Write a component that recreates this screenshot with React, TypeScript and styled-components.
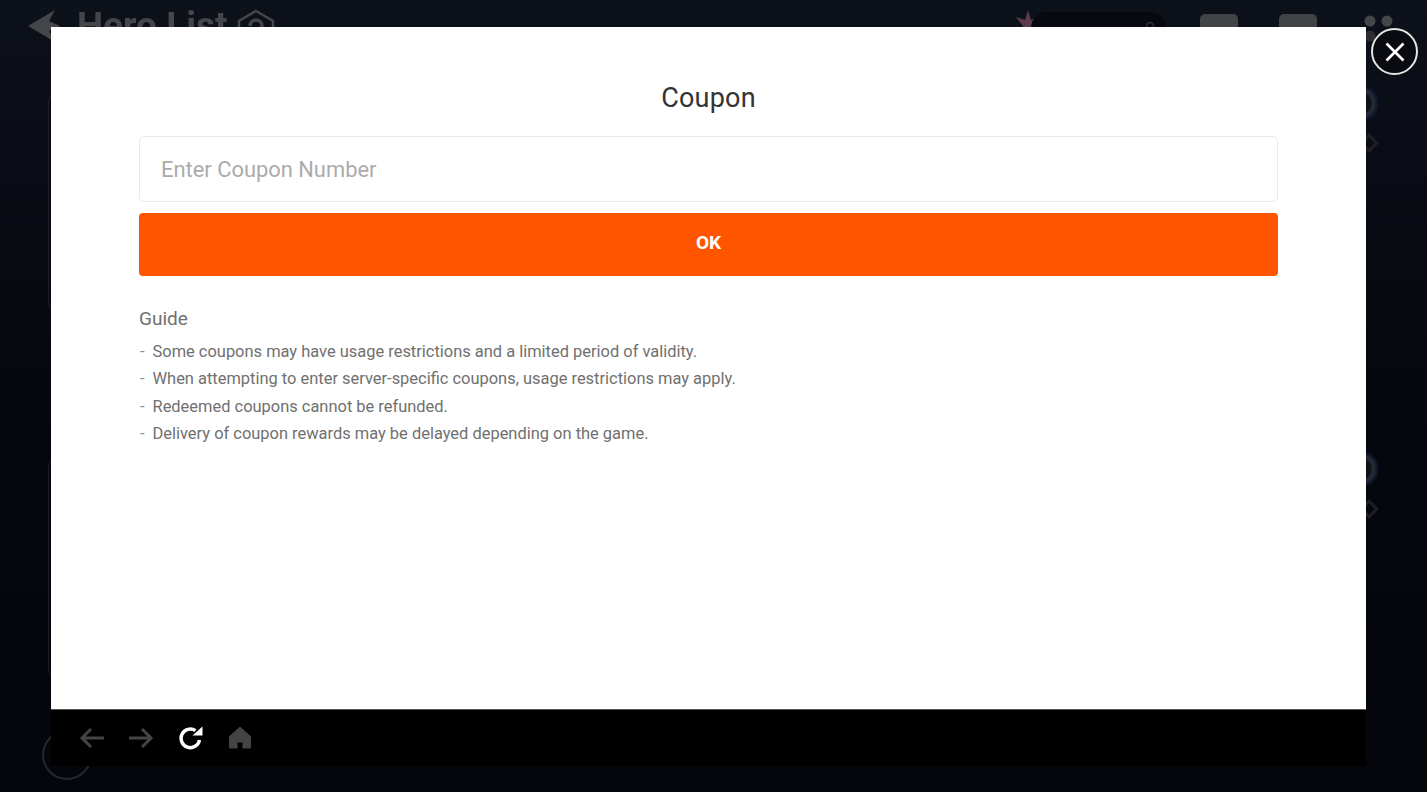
import React, { useState } from 'react';
import styled, { createGlobalStyle } from 'styled-components';

const GlobalStyle = createGlobalStyle`
  html, body, #root {
    margin: 0;
    padding: 0;
    height: 100%;
  }
  body {
    overflow: hidden;
    background: #05070d;
    font-family: Roboto, "Liberation Sans", sans-serif;
  }
`;

// --- Dimmed game page behind the popup ---

const GamePage = styled.div`
  height: 792px;
  overflow: hidden;
  box-sizing: border-box;
  padding: 8px 33px 0 28px;
  display: flex;
  flex-direction: column;
  background: linear-gradient(180deg, #0d1119 0%, #090c14 22%, #05070e 55%, #04060c 100%);
`;

const GameHeader = styled.header`
  display: flex;
  align-items: center;
  height: 36px;
  flex-shrink: 0;
  filter: blur(0.6px);
`;

const HeroTitle = styled.h1`
  margin: 0 0 0 17px;
  font-size: 37px;
  line-height: 36px;
  font-weight: 700;
  white-space: nowrap;
  color: #45464a;
`;

const Spacer = styled.div`
  flex: 1;
`;

const Currency = styled.div`
  width: 135px;
  height: 32px;
  margin: 4px 34px 0 -10px;
  position: relative;
  border-radius: 16px;
  background: #08090e;

  &::after {
    content: '';
    position: absolute;
    right: 12px;
    top: 10px;
    width: 6px;
    height: 6px;
    border-radius: 50%;
    border: 1px solid #45464a;
  }
`;

const SquareButton = styled.div`
  width: 38px;
  height: 30px;
  margin: 6px 41px 0 0;
  border-radius: 5px;
  background: #424347;

  &:last-of-type {
    margin-right: 43px;
  }
`;

const CardRows = styled.div`
  display: flex;
  flex-direction: column;
  gap: 148px;
  margin: 49px 0 0 20px;
  width: 1318px;
`;

const HeroCard = styled.div`
  position: relative;
  height: 216px;
  border-radius: 8px;
  border: 1px solid #1b1e25;
`;

const LevelRing = styled.div`
  position: absolute;
  top: -4px;
  right: -10px;
  width: 20px;
  height: 26px;
  box-sizing: border-box;
  border-radius: 50%;
  border: 3px solid #2c3038;
  background: #0d1116;
  box-shadow: 0 0 0 3px #111c31;
  filter: blur(0.8px);
`;

const RankDiamond = styled.div`
  position: absolute;
  top: 42px;
  right: -11px;
  width: 14px;
  height: 14px;
  box-sizing: border-box;
  border: 3px solid #1e1f22;
  transform: rotate(45deg);
  filter: blur(0.6px);
`;

const GameBottom = styled.div`
  margin: 53px 0 0 14px;
`;

const RoundButton = styled.div`
  width: 50px;
  height: 50px;
  box-sizing: border-box;
  border-radius: 50%;
  border: 2px solid #26272b;
`;

// --- Coupon popup ---

const Overlay = styled.div`
  position: fixed;
  inset: 0;
  padding: 27px 61px 26px 51px;
  display: flex;
  box-sizing: border-box;
`;

const Dialog = styled.div`
  position: relative;
  flex: 1;
  display: flex;
  flex-direction: column;
`;

const CloseButton = styled.button`
  position: absolute;
  top: 1px;
  right: -52px;
  width: 47px;
  height: 47px;
  padding: 0;
  border: 2px solid #e6e6e6;
  border-radius: 50%;
  background: #0a0b10;
  color: #fff;
  display: flex;
  align-items: center;
  justify-content: center;
  cursor: pointer;
`;

const WebContent = styled.main`
  flex: 1;
  background: #fff;
  padding: 52px 88px 0;
  box-sizing: border-box;
`;

const Title = styled.h2`
  margin: 0;
  font-size: 27px;
  line-height: 39px;
  font-weight: 400;
  letter-spacing: 0.2px;
  text-align: center;
  color: #333;
`;

const CouponInput = styled.input`
  display: block;
  width: 100%;
  height: 66px;
  margin-top: 18px;
  padding: 0 21px;
  box-sizing: border-box;
  border: 1px solid #e8e8e8;
  border-radius: 5px;
  outline: none;
  font-family: inherit;
  font-size: 21.9px;
  color: #222;

  &::placeholder {
    color: #ababab;
    opacity: 1;
  }
`;

const OkButton = styled.button`
  display: block;
  width: 100%;
  height: 63px;
  margin-top: 11px;
  padding: 0 0 4px;
  border: none;
  border-radius: 4px;
  background: #ff5500;
  color: #fff;
  font-family: inherit;
  font-size: 19px;
  font-weight: 700;
  cursor: pointer;
`;

const GuideTitle = styled.h3`
  margin: 30px 0 0;
  font-size: 19px;
  line-height: 26px;
  font-weight: 400;
  color: #707070;
`;

const GuideList = styled.ul`
  list-style: none;
  margin: 6px 0 0;
  padding: 0;
`;

const GuideItem = styled.li`
  position: relative;
  padding-left: 13.5px;
  font-size: 16.45px;
  line-height: 27.4px;
  color: #707070;

  &::before {
    content: '-';
    position: absolute;
    left: 1px;
    color: #8c8c8c;
  }
`;

const BrowserBar = styled.nav`
  height: 57px;
  flex-shrink: 0;
  display: flex;
  align-items: center;
  gap: 23px;
  padding-left: 28px;
  background: #000;
  border-top: 1px solid #555;
  box-sizing: border-box;
`;

const NavIcon = styled.svg<{ $active?: boolean }>`
  width: 26px;
  height: 26px;
  color: ${props => (props.$active ? '#fff' : '#444')};
`;

const guideLines = [
  'Some coupons may have usage restrictions and a limited period of validity.',
  'When attempting to enter server-specific coupons, usage restrictions may apply.',
  'Redeemed coupons cannot be refunded.',
  'Delivery of coupon rewards may be delayed depending on the game.',
];

const App: React.FC = () => {
  const [coupon, setCoupon] = useState('');

  return (
    <>
      <GlobalStyle />
      <GamePage>
        <GameHeader>
          <svg width="32" height="34" viewBox="0 0 32 34" style={{ flexShrink: 0 }}>
            <path d="M0 17 L27 1 L21 12 L32 17 L21 22 L27 33 Z" fill="#45464a" />
          </svg>
          <HeroTitle>Hero List</HeroTitle>
          <svg width="40" height="42" viewBox="0 0 40 42" style={{ marginLeft: 8, marginTop: 8, flexShrink: 0 }}>
            <path d="M20 2 L37 12 V30 L20 40 L3 30 V12 Z" fill="none" stroke="#45464a" strokeWidth="2.5" />
            <path d="M14 17 C14 9 26 9 26 17 C26 22 20 22 20 27" fill="none" stroke="#45464a" strokeWidth="3.5" />
          </svg>
          <Spacer />
          <svg width="26" height="36" viewBox="0 0 26 36" style={{ flexShrink: 0 }}>
            <path d="M13 2 L16 12 L25 9 L18 18 L25 28 L13 24 L1 28 L8 18 L1 9 L10 12 Z" fill="#5c3c4c" />
          </svg>
          <Currency />
          <SquareButton />
          <SquareButton />
          <svg width="34" height="40" viewBox="0 0 34 40" style={{ marginTop: 8, flexShrink: 0 }}>
            <circle cx="10" cy="11" r="5.5" fill="#45464a" />
            <circle cx="27" cy="11" r="5.5" fill="#45464a" />
            <circle cx="10" cy="26" r="5.5" fill="#2c2d31" />
            <circle cx="27" cy="26" r="5.5" fill="#2c2d31" />
          </svg>
        </GameHeader>
        <CardRows>
          <HeroCard>
            <LevelRing />
            <RankDiamond />
          </HeroCard>
          <HeroCard>
            <LevelRing />
            <RankDiamond />
          </HeroCard>
        </CardRows>
        <GameBottom>
          <RoundButton />
        </GameBottom>
      </GamePage>

      <Overlay>
        <Dialog>
          <CloseButton aria-label="Close">
            <svg width="24" height="24" viewBox="0 0 24 24" fill="none" stroke="currentColor" strokeWidth="2.6">
              <path d="M3.5 3.5 L20.5 20.5 M20.5 3.5 L3.5 20.5" />
            </svg>
          </CloseButton>
          <WebContent>
            <Title>Coupon</Title>
            <CouponInput
              type="text"
              placeholder="Enter Coupon Number"
              value={coupon}
              onChange={(e) => setCoupon(e.target.value)}
            />
            <OkButton type="button">OK</OkButton>
            <GuideTitle>Guide</GuideTitle>
            <GuideList>
              {guideLines.map((line) => (
                <GuideItem key={line}>{line}</GuideItem>
              ))}
            </GuideList>
          </WebContent>
          <BrowserBar>
            <NavIcon viewBox="0 0 26 26" fill="none" stroke="currentColor" strokeWidth="3">
              <path d="M25 13 H3 M12 4 L3 13 L12 22" />
            </NavIcon>
            <NavIcon viewBox="0 0 26 26" fill="none" stroke="currentColor" strokeWidth="3">
              <path d="M1 13 H23 M14 4 L23 13 L14 22" />
            </NavIcon>
            <NavIcon $active viewBox="0 0 26 26" fill="none" stroke="currentColor" strokeWidth="3.4">
              <path d="M22.5 15 A9.3 9.3 0 1 1 18.5 5.6" />
              <path d="M15.5 10.5 H25.5 V1.5 Z" fill="currentColor" stroke="none" />
            </NavIcon>
            <NavIcon viewBox="0 0 26 26" fill="currentColor">
              <path d="M14 1.5 L25 11.5 V22 Q25 23.5 23.5 23.5 H16.5 V17.5 H11.5 V23.5 H4.5 Q3 23.5 3 22 V11.5 Z" />
            </NavIcon>
          </BrowserBar>
        </Dialog>
      </Overlay>
    </>
  );
};

export default App;
